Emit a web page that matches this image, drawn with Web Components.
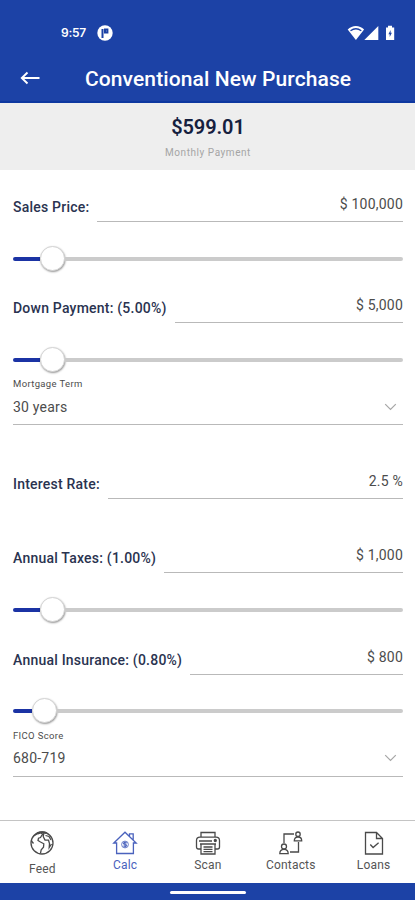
<!DOCTYPE html>
<html lang="en">
<head>
<meta charset="utf-8">
<title>Conventional New Purchase</title>
<style>
html,body{margin:0;height:100%;background:#fff}
body{font-family:Roboto,"Liberation Sans",sans-serif;color:#15203f}
</style>
</head>
<body>
<calc-app></calc-app>
<script>
const define = (name, html, setup) => customElements.define(name, class extends HTMLElement {
  connectedCallback() {
    if (this.shadowRoot) return;
    const t = document.createElement('template');
    t.innerHTML = html;
    const root = this.attachShadow({mode: 'open'});
    root.append(t.content.cloneNode(true));
    if (setup) setup(this, root);
  }
});

define('status-bar', `
<style>
:host{display:flex;align-items:center;height:31px;padding:17px 18px 0 61px;color:#fff}
.time{width:26px;white-space:nowrap;font:600 12px/16px Inter,sans-serif;letter-spacing:-.25px}
.p{margin-left:10px}
.right{margin-left:auto;display:flex;align-items:center}
svg{display:block}
</style>
<span class="time">9:57</span>
<svg class="p" width="16" height="16" viewBox="0 0 16 16"><circle cx="8" cy="8" r="7.7" fill="#fff"/><path d="M5.500 13V4M8 4.500h2.400v3H8Z" fill="none" stroke="#1c42a6" stroke-width="2"/></svg>
<div class="right">
<svg width="50" height="16" viewBox="0 0 50 16" fill="#fff"><path d="M.7 4.600C5-.2 12.800-.2 17.100 4.600L8.900 15Z"/><path d="M3.500 5.800Q8.900 1.700 14.300 5.800" fill="none" stroke="#1c42a6" stroke-width="1.300"/><path d="M31.300 1v14H17.300Z"/><path d="M39 2.500h2V.8h4v1.700h2.200V15H39Z"/><path d="M43.600 5l-2.200 4.300h1.300V12l2.200-4.300h-1.300Z" fill="#1c42a6"/></svg>
</div>`);

define('title-bar', `
<style>
:host{display:flex;align-items:center;height:55px;padding:0 20px;box-sizing:border-box;color:#fff}
svg{display:block;flex:none;margin-top:4px}
h1{margin:7px 0 0 45px;white-space:nowrap;font:500 21px/26px Roboto,sans-serif;letter-spacing:.1px}
</style>
<svg width="20" height="14" viewBox="0 0 20 14"><path d="M19.500 7H2M7.500 1.500L1.800 7l5.700 5.500" fill="none" stroke="#fff" stroke-width="1.900"/></svg>
<h1><slot></slot></h1>`);

define('payment-summary', `
<style>
:host{display:flex;flex-direction:column;align-items:center;height:67px;box-sizing:border-box;padding:11px 0 0 1px;background:#eee}
.amount{font:600 20px/26px Roboto,sans-serif;color:#15203f;letter-spacing:-.1px}
.cap{margin-top:6px;font:400 10px/14px Roboto,sans-serif;color:#a5a5a5;letter-spacing:.55px}
</style>
<div class="amount"><slot name="amount"></slot></div>
<div class="cap"><slot></slot></div>`);

define('money-field', `
<style>
:host{display:flex;height:40px;gap:8px}
.label{white-space:nowrap;font:500 14px/16px Roboto,sans-serif;letter-spacing:.22px;padding-top:17px;color:#2a3350}
.value{flex:1;box-sizing:border-box;border-bottom:1px solid #b9b9b9;text-align:right;padding-top:14px;font:400 14px/16px Roboto,sans-serif;color:#4c4c4c;white-space:pre;letter-spacing:.22px}
</style>
<div class="label"><slot></slot></div><div class="value"><slot name="value"></slot></div>`);

define('range-slider', `
<style>
:host{display:block;height:61px;box-sizing:border-box;padding-top:24px}
.row{display:flex;align-items:center;height:25px}
.fill{height:4px;background:#1b33a4;border-radius:2px 0 0 2px;width:var(--at)}
.thumb{flex:none;width:25px;height:25px;border-radius:50%;background:#fff;box-sizing:border-box;border:1px solid #d4d4d4;box-shadow:.5px 1px 2px rgba(0,0,0,.42)}
.rest{flex:1;height:4px;background:#cbcbcb;border-radius:0 2px 2px 0}
</style>
<div class="row"><div class="fill"></div><div class="thumb"></div><div class="rest"></div></div>`,
(el, root) => root.querySelector('.row').style.setProperty('--at', el.getAttribute('at') + 'px'));

define('select-field', `
<style>
:host{display:block;height:48px;box-sizing:border-box;border-bottom:1px solid #b9b9b9}
.cap{font:400 9.500px/14px Roboto,sans-serif;letter-spacing:.35px;color:#4c4c4c}
.row{display:flex;justify-content:space-between;align-items:center;height:16px;margin-top:var(--gap,8px);padding-right:6px;font:400 14px/16px Roboto,sans-serif;letter-spacing:.22px;color:#4c4c4c}
svg{display:block}
</style>
<div class="cap"><slot></slot></div>
<div class="row"><slot name="value"></slot><svg width="13" height="8" viewBox="0 0 13 8"><path d="M1.200 1.200L6.500 6.500l5.300-5.300" fill="none" stroke="#a6a6a6" stroke-width="1.200"/></svg></div>`);

define('nav-item', `
<style>
:host{display:flex;flex-direction:column;align-items:center;flex:1;color:#555;padding-top:9px}
:host([active]){color:#4a62bd}
.t{font:400 12px/14px Roboto,sans-serif;letter-spacing:.2px;margin-top:2px}
:host([low]) .t{margin-top:6px}
::slotted(svg){display:block}
</style>
<slot name="icon"></slot><div class="t"><slot></slot></div>`);

define('tab-bar', `
<style>:host{display:flex;height:63px;box-sizing:border-box;border-top:1px solid #c4c4c4;background:#fff;padding-left:1px}</style><slot></slot>`);

define('system-bar', `
<style>:host{display:flex;align-items:center;justify-content:center;height:17px;padding-top:1px;box-sizing:border-box;background:#1c42a6}
i{width:76px;height:3px;border-radius:2px;background:#fff}</style><i></i>`);

define('calc-app', `
<style>
:host{display:flex;flex-direction:column;width:415px;height:900px;background:#fff}
header{height:103px;box-sizing:border-box;background:#1c42a6;border-bottom:2px solid #0e38a0}
main{flex:1;padding:12px 12px 0 13px}
.short{height:54px}.g1{margin-top:34px}.tall{height:62px}
.raised{padding-top:23px}.tight{--gap:7px}
svg{fill:none;stroke:#4a4a4a;stroke-width:1.300}
</style>
<header><status-bar></status-bar><title-bar>Conventional New Purchase</title-bar></header>
<payment-summary><span slot="amount">$599.01</span>Monthly Payment</payment-summary>
<main>
<money-field>Sales Price:<span slot="value">$ 100,000</span></money-field>
<range-slider at="27"></range-slider>
<money-field>Down Payment: (5.00%)<span slot="value">$ 5,000</span></money-field>
<range-slider class="short" at="27"></range-slider>
<select-field>Mortgage Term<span slot="value">30 years</span></select-field>
<money-field class="g1">Interest Rate:<span slot="value">2.5 %</span></money-field>
<money-field class="g1">Annual Taxes: (1.00%)<span slot="value">$ 1,000</span></money-field>
<range-slider class="tall" at="27"></range-slider>
<money-field>Annual Insurance: (0.80%)<span slot="value">$ 800</span></money-field>
<range-slider class="short raised" at="19"></range-slider>
<select-field class="tight">FICO Score<span slot="value">680-719</span></select-field>
</main>
<tab-bar>
<nav-item low><svg slot="icon" width="26" height="26" viewBox="0 0 26 26"><circle cx="13" cy="13" r="11"/><path d="M4.500 6L9 3.500l3-.8 1.500 1.500-2 3.300-2 .7-.5 2.300 2.500 1.500 3.300 1.800-.3 3.400-2.300 2.700-.7 3.300M15 2.500l-.8 4 1.800 3.500 3.500.2 1 3.300-.3 4 2.300-3.500M16.500 5.500l3.500 1 2 3.500M2.500 11l2 2.500"/><path d="M8.500 3.500Q13 1.200 17.500 3.200" stroke-width="2"/></svg>Feed</nav-item>
<nav-item active><svg slot="icon" width="26" height="26" viewBox="0 0 26 26" style="stroke:#4a62bd"><path d="M1.800 13L13 2.200 24.200 13h-2.800v10.500H4.600V13ZM17.500 6.500V3.800h3.700v6"/><circle cx="13" cy="14.500" r="3.400" stroke-width=".8"/><path d="M14.800 12.900q-3.300-1-3.300.5 0 .9 1.600 1.100 1.700.3 1.500 1.200-.3 1.200-3.300.3M13 11.500v6" stroke-width="1.100"/></svg>Calc</nav-item>
<nav-item><svg slot="icon" width="26" height="26" viewBox="0 0 26 26"><path d="M6 7V2.500h14V7M6 19H3.500Q1.500 19 1.500 17v-6.500Q1.500 7.200 5 7.200h16q3.500 0 3.500 3.300V17q0 2-2 2H20M5 14h16M6 14v10h14V14M8.500 17h9M8.500 19.300h9M8.500 21.600h9M4 11h13"/><circle cx="20.300" cy="10.500" r="1" fill="#333"/></svg>Scan</nav-item>
<nav-item><svg slot="icon" width="26" height="26" viewBox="0 0 26 26"><path d="M6 13V4h9.500M8 4h8M20.500 12v10H12"/><circle cx="20" cy="4.200" r="2.200"/><path d="M16.300 10.800q0-3.800 3.700-3.800t3.700 3.800Z"/><circle cx="6" cy="16.500" r="2.500"/><path d="M1.800 23.700q0-4.300 4.200-4.300t4.200 4.300Z"/></svg>Contacts</nav-item>
<nav-item><svg slot="icon" width="26" height="26" viewBox="0 0 26 26"><path d="M4.500 2.500h11l6 6v15.500h-17ZM15.500 2.500v6h6"/><path d="M9.300 14.500l2.800 3 5.500-4.800"/></svg>Loans</nav-item>
</tab-bar>
<system-bar></system-bar>`);
</script>
</body>
</html>
